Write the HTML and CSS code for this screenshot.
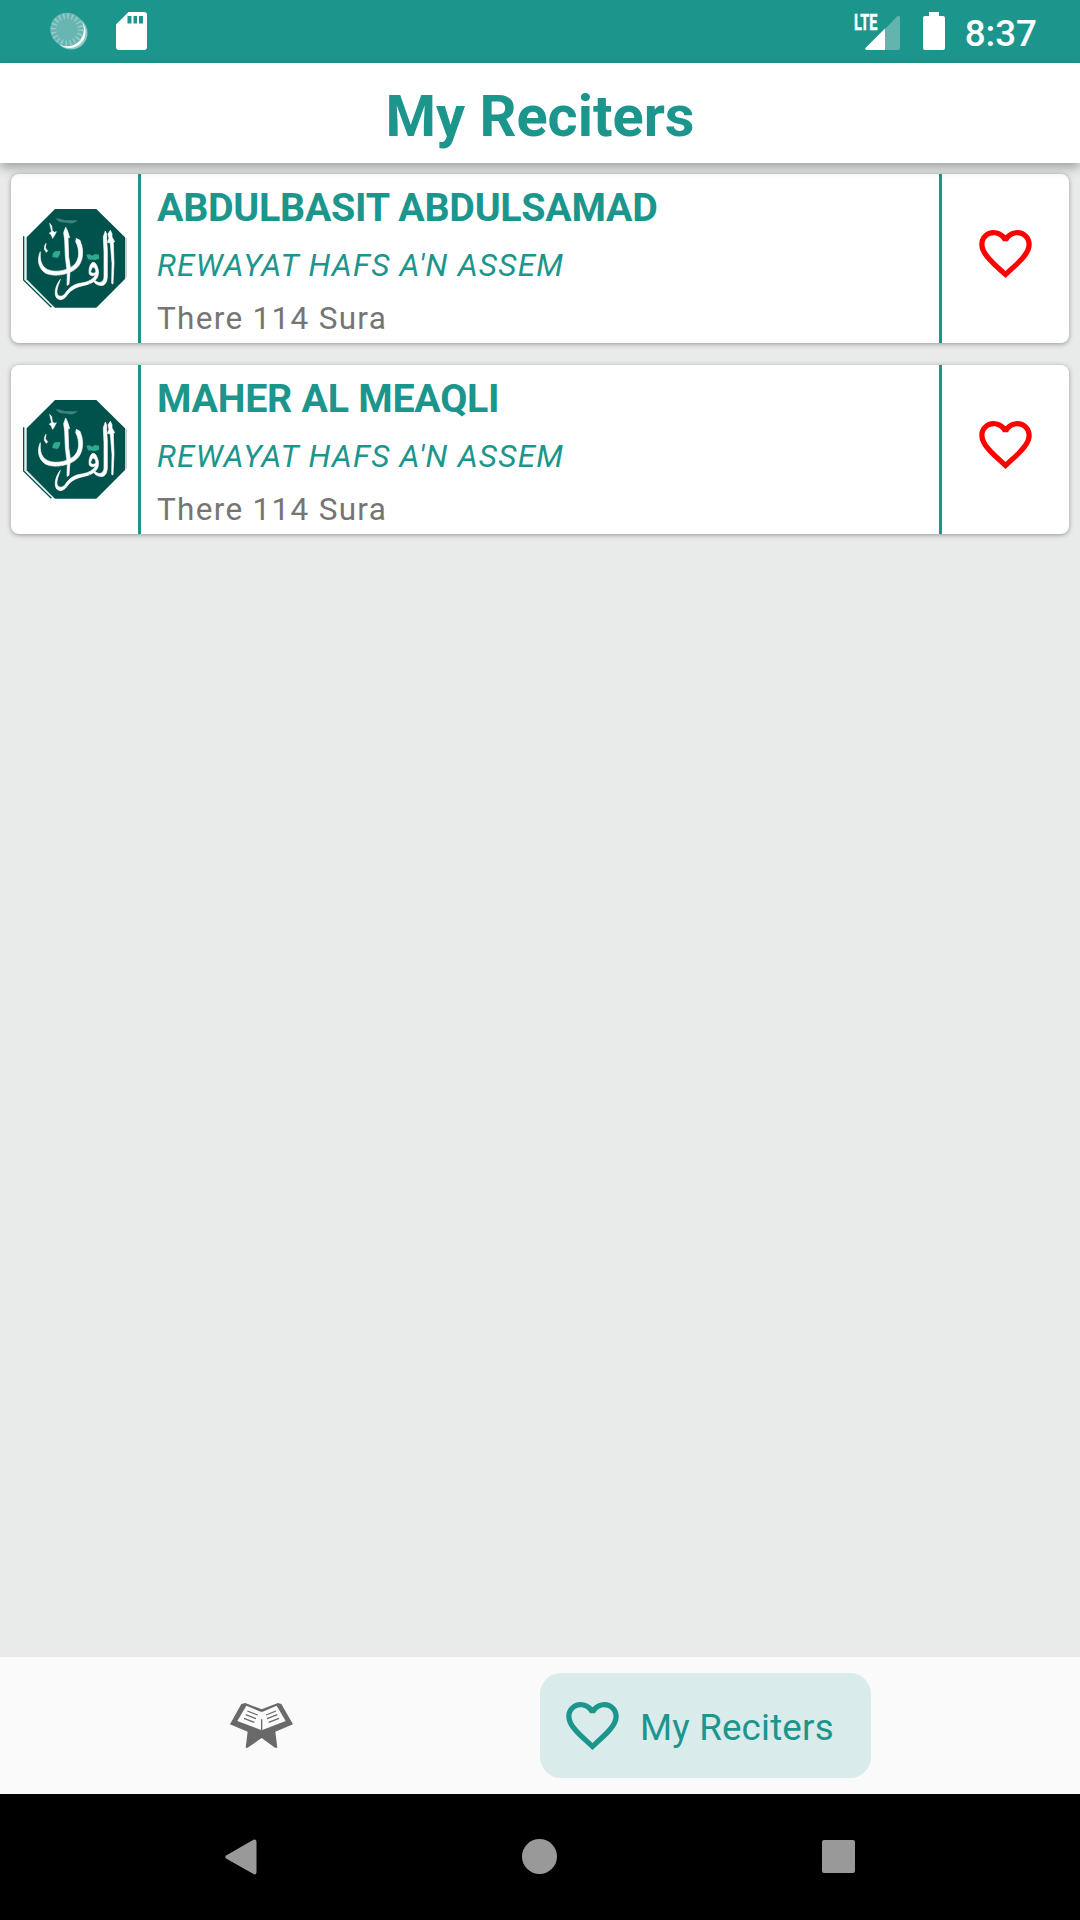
FILE: index.html
```html
<!DOCTYPE html>
<html lang="en">
<head>
<meta charset="utf-8">
<title>My Reciters</title>
<link rel="stylesheet" href="styles.css">
</head>
<body>
<svg class="defs" aria-hidden="true">
  <symbol id="heart" viewBox="0 0 24 24">
    <path d="M16.5 3c-1.74 0-3.41.81-4.5 2.09C10.91 3.81 9.24 3 7.5 3 4.42 3 2 5.42 2 8.5c0 3.78 3.4 6.86 8.55 11.54L12 21.35l1.45-1.32C18.6 15.36 22 12.28 22 8.5 22 5.42 19.58 3 16.5 3zm-4.4 15.55l-.1.1-.1-.1C7.14 14.24 4 11.39 4 8.5 4 6.5 5.5 5 7.5 5c1.54 0 3.04.99 3.57 2.36h1.87C13.46 5.99 14.96 5 16.5 5c2 0 3.5 1.5 3.5 3.5 0 2.89-3.14 5.74-7.9 10.05z"/>
  </symbol>
  <symbol id="emblem" viewBox="45 120 360 360">
    <path fill="#c9cfce" d="M375 234h6v118l-6 4z"/>
    <path fill="#00524c" d="M165 147H289L375 232V357L289 443H165L80 358V232Z"/>
    <path fill="none" stroke="#00524c" stroke-width="4" d="M71 229V360L154 442"/>
    <path fill="none" stroke="#9dbcb9" stroke-width="2" d="M78.500 232V358L162 441"/>
    <path fill="#3f827b" d="M167 175C185 174 193 184 207 180C217 182 225 180 233 181C225 190 214 192 204 189C190 187 178 191 167 175Z"/>
    <path fill="#2faa8e" d="M164 274L181 273L180 283L173 294L157 291L158 282ZM259 284L268 283L277 287L285 282L297 284L297 296L286 300L264 298Z"/>
    <g fill="#fff" stroke="#fff" stroke-width="2" stroke-linejoin="round">
      <path d="M197 201L203 214L209 233L204 233L206 290L211 322L207 373L201 376L202 340L196 290L194 240L191 218Z"/>
      <path d="M121 275C112 295 112 322 136 339C170 355 225 339 239 313C251 292 249 265 243 250L240 241L229 235L227 245L232 256C239 280 237 302 220 317C200 333 155 342 134 323C119 308 121 291 121 275Z"/>
      <path d="M149 190L155 197L157 212L163 217L169 215L164 225L158 235L154 225L148 219L155 215Z"/>
      <path d="M138 250L136 264L143 272L139 277L133 268L134 257Z"/>
      <path d="M181 358C164 380 162 405 171 415C183 424 194 416 201 406C215 385 237 379 261 374C285 367 298 354 295 331C291 314 286 306 278 307C269 312 265 332 268 342C272 349 280 348 286 344C282 357 264 366 245 369C221 372 207 383 196 400C188 412 175 410 172 402C168 390 176 374 181 358ZM277 322C284 319 289 330 287 337C281 342 272 340 272 333Z"/>
      <path d="M316 213L320 222L320 237L322 270V350C321 372 311 379 298 376C286 373 282 367 280 361L287 363C298 372 312 367 312 350L312 275L310 230Z"/>
      <path d="M331 211L336 221L336 231L344 245L340 248L342 310L339 372L335 370L336 310L331 249L322 247L327 235L324 222Z"/>
    </g>
  </symbol>
</svg>

<div class="screen">
  <div class="status">
    <div class="status-left">
      <svg class="sync" viewBox="0 0 40 40">
        <circle cx="22" cy="22" r="16.500" fill="#8ccac5"/>
        <circle cx="20.500" cy="21" r="16" fill="#fff"/>
        <circle cx="18" cy="18.500" r="16.800" fill="#68b5b1"/>
        <circle cx="18" cy="18.500" r="13.500" fill="none" stroke="#99cdca" stroke-width="5.500" stroke-dasharray="1.400 2.841"/>
      </svg>
      <svg class="sdcard" viewBox="0 0 31 38">
        <path fill="#fff" fill-rule="evenodd" d="M12.500 0H28Q31 0 31 3V35Q31 38 28 38H3Q0 38 0 35V12.500ZM11.500 4V11.500H15.500V4ZM17.500 4V11.500H21V4ZM23 4V11.500H27V4Z"/>
      </svg>
    </div>
    <div class="status-right">
      <div class="signal">
        <span class="lte">LTE</span>
        <svg viewBox="0 0 36 36">
          <path fill="#63b4af" d="M20 14L32.500 1Q35 0 35 3V33Q35 35 33 35H20Z"/>
          <path fill="#fff" d="M20 13.500V35H2Q-.5 35 .5 33Z"/>
        </svg>
      </div>
      <svg class="battery" viewBox="0 0 22 38"><path fill="#fff" d="M6 0H16V4H20Q22 4 22 6V36Q22 38 20 38H2Q0 38 0 36V6Q0 4 2 4H6Z"/></svg>
      <span class="clock">8:37</span>
    </div>
  </div>

  <header class="appbar"><h1>My Reciters</h1></header>

  <main class="list">
    <article class="card">
      <div class="thumb"><svg><use href="#emblem"/></svg></div>
      <div class="info">
        <h2>ABDULBASIT ABDULSAMAD</h2>
        <p class="style">REWAYAT HAFS A'N ASSEM</p>
        <p class="count">There 114 Sura</p>
      </div>
      <div class="fav"><svg class="heart"><use href="#heart"/></svg></div>
    </article>
    <article class="card">
      <div class="thumb"><svg><use href="#emblem"/></svg></div>
      <div class="info">
        <h2>MAHER AL MEAQLI</h2>
        <p class="style">REWAYAT HAFS A'N ASSEM</p>
        <p class="count">There 114 Sura</p>
      </div>
      <div class="fav"><svg class="heart"><use href="#heart"/></svg></div>
    </article>
  </main>

  <nav class="tabs">
    <svg class="book" viewBox="90 162 189 189">
      <path fill="#696969" d="M124 192L136 189L185 208L234 189L244 192L279 253L226 275L232 323H225L185 294L143 323H137L143 275L90 253Z"/>
      <path fill="#fbfbfb" d="M139 197L182 215H188L230 197L257 243L187 270V238H183V270L112 243Z"/>
      <path fill="none" stroke="#696969" stroke-width="3.500" d="M142 213L173 225M137 224L168 236M132 235L163 247M228 213L198 225M232 224L201 236M237 235L206 247"/>
    </svg>
    <div class="pill">
      <svg class="heart"><use href="#heart"/></svg>
      <span>My Reciters</span>
    </div>
  </nav>

  <div class="sysnav">
    <svg class="back" viewBox="0 0 32 36"><path fill="#999" d="M28.500 .8Q31.500 -.5 31.500 3V33Q31.500 36.500 28.500 35L1 19.500Q-.5 18 1 16.500Z"/></svg>
    <span class="home"></span>
    <span class="recent"></span>
  </div>
</div>
</body>
</html>
```
FILE: styles.css
```css
* { box-sizing: border-box; }
body { margin: 0; font-family: Roboto, sans-serif; }
h1, h2, p { margin: 0; white-space: nowrap; }
svg { display: block; }
.defs { display: none; }

.screen {
  width: 1080px;
  height: 1920px;
  display: flex;
  flex-direction: column;
  background: #e8ebea;
  overflow: hidden;
}

.status {
  height: 63px;
  background: #1c958d;
  display: flex;
  justify-content: space-between;
  padding: 0 43px 0 49px;
}
.status-left, .status-right { display: flex; align-items: flex-start; }
.sync { width: 40px; height: 40px; margin-top: 11px; }
.sdcard { width: 31px; height: 38px; margin: 12px 0 0 27px; }
.signal { display: flex; padding-top: 15px; }
.signal svg { width: 36px; height: 36px; margin-left: -14px; }
.lte {
  width: 25px;
  height: 16px;
  font-size: 22px;
  font-weight: 700;
  line-height: 16px;
  color: #fff;
  -webkit-text-stroke: .5px #fff;
  transform: scaleX(.66);
  transform-origin: 0 50%;
}
.battery { width: 22px; height: 38px; margin: 12px 0 0 22px; }
.clock {
  margin-left: 20px;
  font-size: 36.750px;
  font-weight: 500;
  line-height: 68px;
  color: #fff;
}

.appbar {
  position: relative;
  height: 100px;
  background: #fff;
  text-align: center;
  box-shadow: 0 5px 10px rgba(0, 0, 0, .3);
}
.appbar h1 {
  font-size: 57.750px;
  font-weight: 700;
  line-height: 107px;
  color: #1c958d;
}

.list {
  flex: 1;
  display: flex;
  flex-direction: column;
  gap: 22px;
  padding: 11px;
}
.card {
  height: 169px;
  display: grid;
  grid-template-columns: 127px 804px 1fr;
  background: #fff;
  border-radius: 8px;
  box-shadow: 0 1px 5px rgba(0, 0, 0, .36);
}
.thumb { padding: 26px 0 0 4px; }
.thumb svg { width: 120px; height: 120px; }
.info {
  border: solid #1c958d;
  border-width: 0 3px;
  padding: 7px 0 0 16px;
  color: #1c958d;
}
.info h2 { font-size: 39.375px; font-weight: 700; line-height: 54px; letter-spacing: -.27px; }
.info .style { font-size: 31.500px; font-style: italic; line-height: 37px; margin-top: 12px; letter-spacing: 1.270px; }
.info .count { font-size: 31.500px; line-height: 37px; margin-top: 16px; letter-spacing: 1.300px; color: #757575; }
.heart { width: 63px; height: 63px; }
.fav { padding: 48px 0 0 32px; }
.fav .heart { fill: #f00; }

.tabs {
  height: 137px;
  background: #fafafa;
  display: flex;
  align-items: center;
  padding-left: 230px;
}
.book { width: 63px; height: 63px; }
.pill {
  width: 331px;
  height: 105px;
  margin-left: 247px;
  padding-left: 21px;
  display: flex;
  align-items: center;
  gap: 16px;
  border-radius: 21px;
  background: #d9ebea;
  color: #1c958d;
  fill: #1c958d;
  font-size: 36.750px;
  letter-spacing: .18px;
}
.pill span { padding-top: 4px; }

.sysnav {
  height: 126px;
  background: #000;
  display: flex;
  align-items: center;
  padding: 0 0 1px 225px;
}
.back { width: 32px; height: 36px; }
.home { width: 35px; height: 35px; margin-left: 265px; border-radius: 50%; background: #999; }
.recent { width: 33px; height: 33px; margin-left: 265px; border-radius: 2px; background: #999; }
```
